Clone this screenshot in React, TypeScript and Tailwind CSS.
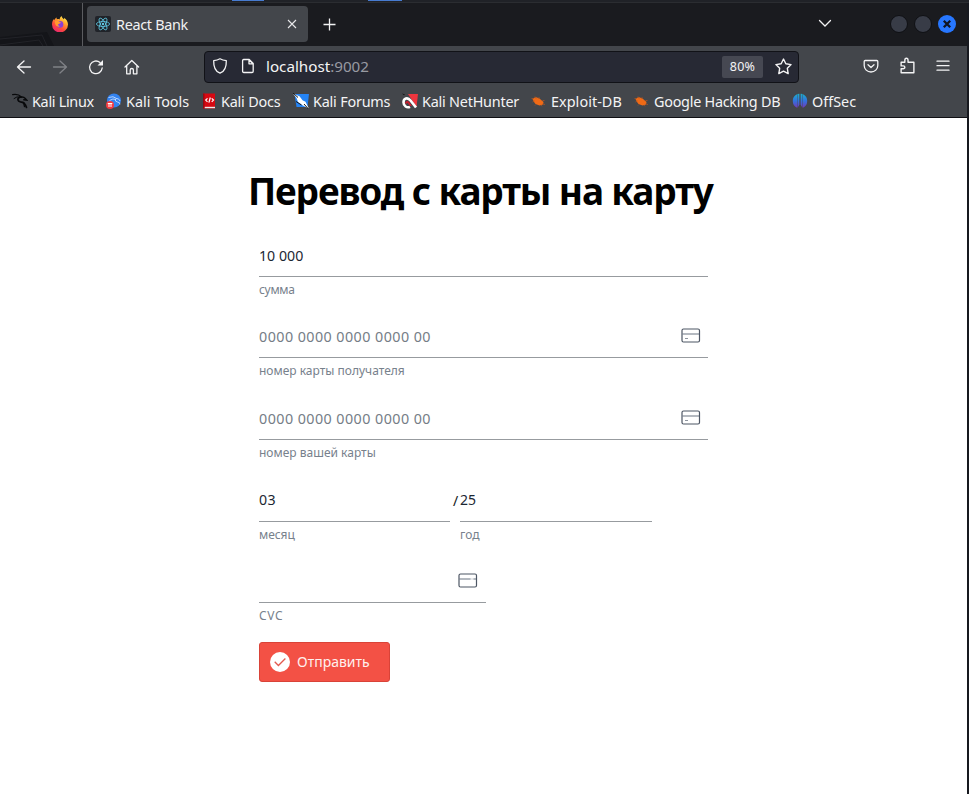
import React from "react";

const UI = "font-['Noto_Sans','Open_Sans',sans-serif]";

function FirefoxLogo() {
  return (
    <svg width="16" height="16" viewBox="0 0 16 16" className="-mt-[2px]">
      <defs>
        <linearGradient id="ff" x1="0.8" y1="0" x2="0.2" y2="1">
          <stop offset="0" stopColor="#fff44f" />
          <stop offset="0.35" stopColor="#ffa02e" />
          <stop offset="0.65" stopColor="#ff4b3a" />
          <stop offset="1" stopColor="#e4207a" />
        </linearGradient>
      </defs>
      <path d="M9.6 0c.2 1.6 1.2 2.2 2.2 3.2.5-.1.4-1 .2-1.5 2.300 1.300 4 4 4 6.700A8 8 0 0 1 0 8.500C0 6 .9 4.300 1.800 3.100c0 .5.1.9.3 1.200C2.700 3.500 3.500 2.300 4.700 1.600c-.1.8 0 1.300.3 1.700.9-.3 1.800-.2 2.600.1C7.700 2 8.500.7 9.600 0z" fill="url(#ff)" />
      <circle cx="8" cy="8.400" r="3.300" fill="#8a3fd6" />
      <path d="M3 5c1.500-.6 3.500-.3 4.500.7l1.500.7c-.8 1.200-2 1.200-2.700 1.700-.4.8 0 2 1.700 2.200-2.200 1.300-5.500-.5-5-5.300z" fill="#ff9a2e" />
    </svg>
  );
}

function ReactLogo() {
  return (
    <svg width="16" height="16" viewBox="0 0 16 16" fill="none" stroke="#61c9e4" strokeWidth="0.8">
      <rect width="16" height="16" rx="2" fill="#202329" stroke="none" />
      <ellipse cx="8" cy="8" rx="6.600" ry="2.500" />
      <ellipse cx="8" cy="8" rx="6.600" ry="2.500" transform="rotate(60 8 8)" />
      <ellipse cx="8" cy="8" rx="6.600" ry="2.500" transform="rotate(120 8 8)" />
      <circle cx="8" cy="8" r="1.200" fill="#61c9e4" stroke="none" />
    </svg>
  );
}

function Line({ d, size = 16, className = "" }: { d: string; size?: number; className?: string }) {
  return (
    <svg width={size} height={size} viewBox="0 0 16 16" fill="none" stroke="currentColor" strokeWidth="1.3" strokeLinecap="round" strokeLinejoin="round" className={className}>
      <path d={d} />
    </svg>
  );
}

function BookmarkIcon({ kind }: { kind: string }) {
  return (
    <svg width="16" height="16" viewBox="0 0 16 16" className="shrink-0">
      {kind === "kali" && (
        <g fill="none" stroke="#08090b" strokeLinecap="round">
          <path d="M.6 1.700Q6 .6 9.500 4" strokeWidth="1.200" />
          <path d="M2 5.500Q4.500 3 8.500 4" strokeWidth="1" />
          <path d="M8 4C4.800 5.500 5.500 8.300 8.500 8.800c3.500.3 5 1.800 6 5.700" strokeWidth="1.700" />
          <path d="M8.500 4.300q3-.8 4.800 1.200l1.500 1.700-3-.5" strokeWidth="1.400" />
          <path d="M11.500 9.500l1 4" strokeWidth="1.300" />
        </g>
      )}
      {kind === "tools" && (
        <>
          <circle cx="8" cy="7.500" r="7" fill="#3383f0" />
          <path d="M2.500 4.500q5-2 8 1M3.500 7.500q3.500-2.500 6.500-1M10 5.500q3-.5 4 2.500M9.500 6q-1 2.500 2 3t2.300 2.500" stroke="#c4dbff" strokeWidth="0.900" fill="none" />
          <circle cx="4" cy="12" r="4" fill="#f43b40" />
          <path d="M1.800 10.500h4.500M3 11v3M5 11v3" stroke="#fff" strokeWidth="1" fill="none" />
        </>
      )}
      {kind === "docs" && (
        <>
          <path d="M1 .5h12v15H1z" fill="#d70812" />
          <path d="M2.500 13.800h10.500v1.400H2.500z" fill="#f0e9e9" />
          <path d="M1 .5h1.500v15H1z" fill="#980810" />
          <path d="M5.500 5.300L3.700 7.100l1.800 1.800M9.700 5.300l1.800 1.800-1.800 1.800M8.300 4.500L6.900 9.700" stroke="#fff" strokeWidth="1.200" fill="none" />
        </>
      )}
      {kind === "forums" && (
        <>
          <path d="M1.500 1H16l-1.500 13H3.500z" fill="#2584f5" />
          <path d="M0 .5l6.500 2.800 3 4 3 1.500 3.500 7-6.500-3.500L5 9 3.500 5z" fill="#fff" />
          <path d="M0 0l5 4.500M11 11l4.500 5M3 8.500L8.500 12" stroke="#17181b" strokeWidth="1" />
        </>
      )}
      {kind === "hunter" && (
        <>
          <path d="M6 1h10l-1.500 13z" fill="#ee353e" />
          <path d="M0 .5l3 1-1 .7z" fill="#111" />
          <path d="M14 14.500L8.500 7.500C5.500 3.800 1.500 5.500 1.500 9.300s3.500 6 6.500 4.500" fill="none" stroke="#fff" strokeWidth="2.600" />
          <path d="M3.800 10.500q1-3 3-.5t2 3" stroke="#c91d2e" strokeWidth="2" fill="none" />
        </>
      )}
      {kind === "exploit" && (
        <>
          <path d="M1.500 6l3-2L8.500 5.500l4 3.500-.5 2.500-3.500 1L4.500 11 3 9z" fill="#f06a16" />
          <path d="M.5 5.500h2M1.500 9l2-1M4 3.500l1 2M8 4V6M11.500 7.500h2M11.500 11l2.500.5M10 12l1 1.300M5 11.500l-1 1" stroke="#a85426" strokeWidth="0.8" />
        </>
      )}
      {kind === "offsec" && (
        <>
          <defs>
            <linearGradient id="os" x1="0" y1="0" x2="0" y2="1">
              <stop offset="0" stopColor="#1cafcb" />
              <stop offset="0.5" stopColor="#3272dd" />
              <stop offset="1" stopColor="#7338b8" />
            </linearGradient>
          </defs>
          <path d="M5 1.300v13.400C2 13.500.8 11 .8 8S2 2.500 5 1.300zM7.400.7v11l-2 3.300V1.100zM8.600.7v11l2 3.300V1.100zM11 1.300v13.400c3-1.200 4.200-3.700 4.200-6.700S14 2.500 11 1.300z" fill="url(#os)" />
        </>
      )}
    </svg>
  );
}

function Bookmark({ kind, label, className, gap = "gap-1" }: { kind: string; label: string; className: string; gap?: string }) {
  return (
    <div className={"flex shrink-0 items-center " + gap + " " + className}>
      <BookmarkIcon kind={kind} />
      <span className="pt-[2px] whitespace-nowrap">{label}</span>
    </div>
  );
}

function CardIcon({ cvc = false }: { cvc?: boolean }) {
  return (
    <svg width="20" height="16" viewBox="0 0 20 16" fill="none" className="-mt-[3px]">
      <path d="M1.500 5h17v2h-17z" fill="#b4b9c0" />
      {cvc ? <path d="M12.500 5.300h3v1.400h-3z" fill="#fff" /> : <path d="M4 10.500h3" stroke="#8d949e" />}
      <rect x="1" y="1" width="17.500" height="13" rx="1.500" stroke="#4d5664" strokeWidth="1.200" />
    </svg>
  );
}

function Field({ value, label, className = "", valueClass = "text-[14.200px] text-[#1c2733]", labelClass = "text-[12px]", icon }: { value: string; label: string; className?: string; valueClass?: string; labelClass?: string; icon?: React.ReactNode }) {
  return (
    <div className={className}>
      <div className="flex h-[41px] items-center justify-between border-b border-[#979b9f] pr-[7px]">
        <span className={"whitespace-pre leading-5 " + valueClass}>{value}</span>
        {icon}
      </div>
      <div className={"mt-[3px] leading-5 text-[#77818c] " + labelClass}>
        <span>{label}</span>
      </div>
    </div>
  );
}

export default function App() {
  return (
    <div className={"flex h-[794px] w-[969px] flex-col overflow-hidden bg-[#17191f] " + UI}>
      <div className="flex h-[3px] shrink-0 items-start border-b border-[#2b2d31] bg-[#202227]">
        <div className="ml-[232px] h-px w-8 bg-[#477bd0]" />
        <div className="ml-[104px] h-px w-[34px] bg-[#477bd0]" />
      </div>
      <div className="mr-[2px] flex h-[676px] grow flex-col">
        <header className="flex h-[43px] shrink-0 bg-[#1a1b1f]">
          <div className="relative flex w-[83px] items-center border-r border-[#5b5c60] pl-[52px]">
            <svg className="absolute left-0 top-[27px]" width="82" height="16" viewBox="0 0 82 16">
              <path d="M0 7l47-5 7 14H0z" fill="#141519" />
              <path d="M0 9l42-4 5 11M0 15l39-5 4 6" stroke="#222328" fill="none" />
            </svg>
            <FirefoxLogo />
          </div>
          <div className="mt-[3px] ml-1 flex h-9 w-[221px] items-center rounded-[4px] bg-[#43464b] pl-2 text-[#f2f2f3]">
            <ReactLogo />
            <span className="ml-[5px] w-[171px] pt-[2px] text-[14.400px] leading-5 tracking-[-0.300px]">React Bank</span>
            <svg width="10" height="10" viewBox="0 0 10 10" stroke="#e8e8ea" strokeWidth="1.100"><path d="M1 1l8 8M9 1L1 9" /></svg>
          </div>
          <svg className="mt-[15px] ml-[15px]" width="13" height="13" viewBox="0 0 13 13" stroke="#f2f2f3" strokeWidth="1.300"><path d="M6.500.5v12M.5 6.500h12" /></svg>
          <svg className="mt-[16px] ml-[482px]" width="14" height="9" viewBox="0 0 14 9" fill="none" stroke="#f2f2f3" strokeWidth="1.300" strokeLinecap="round"><path d="M1.500 1.500L7 7l5.500-5.500" /></svg>
          <div className="mt-3 ml-[58px] flex h-[18px] gap-[6px]">
            <span className="size-[18px] rounded-full border border-[#0f1014] bg-[#383c47]" />
            <span className="size-[18px] rounded-full border border-[#0f1014] bg-[#383c47]" />
            <svg width="18" height="18" viewBox="0 0 18 18"><circle cx="9" cy="9" r="9" fill="#2777ff" /><path d="M5.800 5.800l6.400 6.400M12.200 5.800l-6.400 6.400" stroke="#101522" strokeWidth="2.300" /></svg>
          </div>
        </header>

        <nav className="h-[72px] shrink-0 border-b border-[#101014] bg-[#43464b] text-[#f4f4f5]">
          <div className="flex h-[41px] items-center pl-4">
            <Line className="mt-px" d="M14.500 8h-13M8 2L1.500 8 8 14" />
            <Line className="mt-px ml-5 text-[#808287]" d="M1.500 8h13M8 2l6.500 6L8 14" />
            <svg className="mt-px ml-5" width="16" height="16" viewBox="0 0 16 16" fill="none" stroke="currentColor" strokeWidth="1.300" strokeLinecap="round">
              <path d="M14.200 9A6.300 6.300 0 1 1 12 3.500" />
              <path d="M15 1v5.500H9.500z" fill="currentColor" stroke="none" />
            </svg>
            <Line className="ml-5" d="M1 8l6.800-6.500L14.600 8M2.700 6.800v8h3.500V11q0-1.500 1.600-1.500T9.400 11v3.800h3.500v-8" />
            <div className="ml-[64px] flex h-8 w-[595px] items-center rounded-[4px] border border-[#111217] bg-[#272934] pl-[7px]">
              <Line className="-mt-px" d="M8 .8C6 2 4 2.500 1.700 2.700 1.500 8.500 3.500 13.500 8 15.200c4.500-1.700 6.500-6.700 6.300-12.500C12 2.500 10 2 8 .8z" />
              <Line className="-mt-px ml-3" d="M3.500 1.500h5.700l4 4v7.700q0 1.300-1.200 1.300H3.800q-1.200 0-1.200-1.300V2.700q0-1.200 1-1.200zM9 1.700V5.800h4z" />
              <span className="-mt-[2px] ml-[10px] w-[456px] text-[15.200px] leading-5">localhost<span className="text-[#989aa2]">:9002</span></span>
              <span className="flex h-[22px] w-[41px] items-center justify-center rounded-[2px] bg-[#464852] pt-px text-[12.500px] tracking-[0.3px]">80%</span>
              <Line className="-mt-px ml-3" size={17} d="M8 1l2.200 4.400 4.900.8-3.500 3.500.8 5L8 12.400l-4.400 2.300.8-5L.9 6.200l4.900-.8z" />
            </div>
            <Line className="-mt-[2px] ml-[64px]" d="M2.200 2.500h11.600q1 0 1 1v4a6.800 6.500 0 0 1-13.600 0v-4q0-1 1-1zM5 6.700l3 2.800 3-2.800" />
            <Line className="-mt-[2px] ml-5" size={17} d="M2 14.800V11h2q1.500 0 1.500-1.300T4 8.400H2V5h3.500V3q0-1.800 1.500-1.800T8.500 3v2H14v9.800z" />
            <Line className="-mt-px ml-[19px]" d="M2 3.200h12M2 7.700h12M2 12.200h12" />
          </div>
          <div className="mt-[5px] flex h-[18px] items-center pl-3 text-[14.400px] leading-5">
            <Bookmark kind="kali" label="Kali Linux" className="w-[94px] tracking-[-0.300px]" />
            <Bookmark kind="tools" label="Kali Tools" className="w-24" />
            <Bookmark kind="docs" label="Kali Docs" className="w-[91px] tracking-[-0.200px]" gap="gap-[3px]" />
            <Bookmark kind="forums" label="Kali Forums" className="w-[109px] tracking-[-0.200px]" />
            <Bookmark kind="hunter" label="Kali NetHunter" className="w-[129px] tracking-[-0.220px]" />
            <Bookmark kind="exploit" label="Exploit-DB" className="w-[103px] tracking-[0.050px]" />
            <Bookmark kind="exploit" label="Google Hacking DB" className="w-[158px] tracking-[-0.260px]" />
            <Bookmark kind="offsec" label="OffSec" className="w-20" />
          </div>
        </nav>

        <main className="grow bg-white pl-[259px]">
          <h1 className="-ml-[11px] pt-[45px] text-[37px] leading-[56px] font-bold tracking-[-1.130px] whitespace-nowrap text-black">Перевод с карты на карту</h1>
          <form className="mt-[17px]" onSubmit={(e) => e.preventDefault()}>
            <Field value="10 000" label="сумма" className="h-[81px] w-[449px]" labelClass="text-[12px] tracking-[-0.300px]" />
            <Field value="0000 0000 0000 0000 00" label="номер карты получателя" className="h-[82px] w-[449px]" valueClass="-mt-px text-[#757d86] text-[14.300px] tracking-[0.450px]" icon={<CardIcon />} />
            <Field value="0000 0000 0000 0000 00" label="номер вашей карты" className="h-[82px] w-[449px]" valueClass="-mt-px text-[#757d86] text-[14.300px] tracking-[0.450px]" icon={<CardIcon />} />
            <div className="flex h-[81px]">
              <Field value="03" label="месяц" className="w-[191px]" valueClass="text-[#1c2733] text-[14.200px] tracking-[0.400px] -mt-[3px]" />
              <span className="w-[10px] pt-[10px] pl-[3px] text-[14px] leading-5 text-[#111820]">/</span>
              <Field value="25" label="год" className="w-[192px]" valueClass="text-[#1c2733] text-[14px] -mt-[3px]" />
            </div>
            <Field value="" label="CVC" className="h-[81px] w-[227px]" labelClass="text-[12px] tracking-[0.700px]" icon={<span className="-mr-px ml-auto pr-[2px]"><CardIcon cvc /></span>} />
            <button className="-mt-px flex h-10 w-[131px] items-center rounded-[3px] border border-[#d94338] bg-[#f35145] pl-[10px] text-[14px] text-white">
              <svg width="20" height="20" viewBox="0 0 20 20" fill="none"><circle cx="10" cy="10" r="10" fill="#fff" /><path d="M4.700 9.800l3.700 3.700 7-7" stroke="#e35a50" strokeWidth="1.300" /></svg>
              <span className="-mt-px ml-[7px] text-[#fff0ee]">Отправить</span>
            </button>
          </form>
        </main>
      </div>
    </div>
  );
}
